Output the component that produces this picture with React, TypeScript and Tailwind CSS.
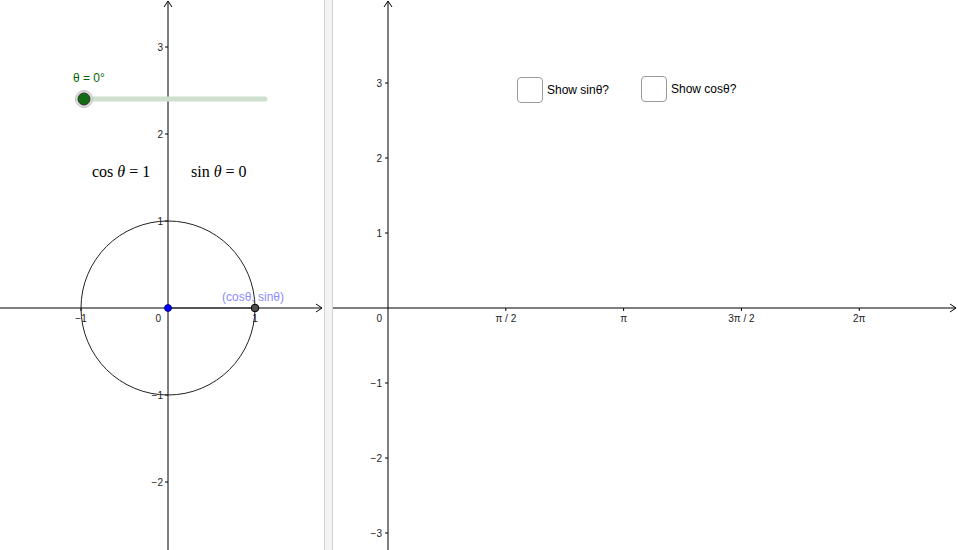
import React from "react";

const lab = "fill-[#222] text-[10px] font-['Liberation_Sans',Arial,sans-serif]";
const serif = "fill-black text-[16px] font-['Liberation_Serif','Times_New_Roman',serif]";

function minus(v: number) {
  return v < 0 ? `\u2212${-v}` : `${v}`;
}

function LeftGraph() {
  const ox = 168, oy = 308, u = 87;
  const yTicks = [3, 2, 1, -1, -2];
  return (
    <svg width={324} height={550} className="block">
      <line x1={0} y1={oy} x2={322} y2={oy} stroke="#000" strokeWidth={1} />
      <polyline points="316,304 322,308 316,312" fill="none" stroke="#000" strokeWidth={1} />
      <line x1={ox} y1={1} x2={ox} y2={550} stroke="#000" strokeWidth={1} />
      <polyline points="164,7 168,1 172,7" fill="none" stroke="#000" strokeWidth={1} />
      {yTicks.map((v) => {
        const y = oy - v * u;
        return (
          <g key={v}>
            <line x1={ox - 3} y1={y} x2={ox} y2={y} stroke="#000" />
            <text x={ox - 5} y={y + 4} textAnchor="end" className={lab}>
              {minus(v)}
            </text>
          </g>
        );
      })}
      {[-1, 1].map((v) => {
        const x = ox + v * u;
        return (
          <g key={v}>
            <line x1={x} y1={oy} x2={x} y2={oy + 3} stroke="#000" />
            <text x={x} y={oy + 14} textAnchor="middle" className={lab}>
              {minus(v)}
            </text>
          </g>
        );
      })}
      <text x={ox - 7} y={oy + 14} textAnchor="end" className={lab}>0</text>

      <circle cx={ox} cy={oy} r={u} fill="none" stroke="#222" strokeWidth={1} />
      <line x1={ox} y1={oy} x2={ox + u} y2={oy} stroke="#555" strokeWidth={2} />
      <circle cx={ox} cy={oy} r={3.5} fill="#0000ff" stroke="#00007a" strokeWidth={0.8} />
      <circle cx={ox + u} cy={oy} r={3.8} fill="#4d4d4d" stroke="#000" strokeWidth={1} />
      <text x={222} y={301} className="fill-[#8c8cff] text-[12px] font-['Liberation_Sans',Arial,sans-serif]">
        (cosθ, sinθ)
      </text>

      <text x={73} y={82} className="fill-[#006400] text-[12px] font-['Liberation_Sans',Arial,sans-serif]">
        θ = 0°
      </text>
      <line x1={84} y1={99} x2={265} y2={99} stroke="#cde0cd" strokeWidth={5} strokeLinecap="round" />
      <circle cx={84} cy={99} r={8.5} fill="#dcdcdc" stroke="#c4c4c4" strokeWidth={1} />
      <circle cx={84} cy={99} r={6} fill="#136b13" stroke="#333" strokeWidth={1} />

      <text x={92} y={177} className={serif}>
        cos <tspan fontStyle="italic">θ</tspan> = 1
      </text>
      <text x={191} y={177} className={serif}>
        sin <tspan fontStyle="italic">θ</tspan> = 0
      </text>
    </svg>
  );
}

function RightGraph() {
  const ox = 55, oy = 308, u = 75;
  const yTicks = [3, 2, 1, -1, -2, -3];
  const xTicks = [
    { v: Math.PI / 2, t: "π / 2" },
    { v: Math.PI, t: "π" },
    { v: (3 * Math.PI) / 2, t: "3π / 2" },
    { v: 2 * Math.PI, t: "2π" },
  ];
  return (
    <svg width={626} height={550} className="block">
      <line x1={0} y1={oy} x2={623} y2={oy} stroke="#000" strokeWidth={1} />
      <polyline points="617,304 623,308 617,312" fill="none" stroke="#000" strokeWidth={1} />
      <line x1={ox} y1={1} x2={ox} y2={550} stroke="#000" strokeWidth={1} />
      <polyline points="51,7 55,1 59,7" fill="none" stroke="#000" strokeWidth={1} />
      {yTicks.map((v) => {
        const y = oy - v * u;
        return (
          <g key={v}>
            <line x1={ox - 3} y1={y} x2={ox} y2={y} stroke="#000" />
            <text x={ox - 6} y={y + 4} textAnchor="end" className={lab}>
              {minus(v)}
            </text>
          </g>
        );
      })}
      {xTicks.map((k) => {
        const x = ox + k.v * u;
        return (
          <g key={k.t}>
            <line x1={x} y1={oy} x2={x} y2={oy + 3} stroke="#000" />
            <text x={x} y={oy + 14} textAnchor="middle" className={lab}>
              {k.t}
            </text>
          </g>
        );
      })}
      <text x={ox - 6} y={oy + 14} textAnchor="end" className={lab}>0</text>
    </svg>
  );
}

function Check({ label, className }: { label: string; className: string }) {
  return (
    <label className={`absolute flex items-center gap-[4px] ${className}`}>
      <span className="block w-[26px] h-[26px] rounded-[4px] border border-[#9a9a9a] bg-white" />
      <span className="text-[12px] text-black leading-none">{label}</span>
    </label>
  );
}

export default function App() {
  return (
    <div className="flex w-[958px] h-[550px] bg-white overflow-hidden font-['Liberation_Sans',Arial,sans-serif]">
      <div className="w-[324px] h-full shrink-0">
        <LeftGraph />
      </div>
      <div className="w-[9px] h-full shrink-0 bg-[#f3f3f3] border-x border-[#d4d4d4]" />
      <div className="relative flex-1 h-full">
        <RightGraph />
        <Check label="Show sinθ?" className="left-[184px] top-[77px]" />
        <Check label="Show cosθ?" className="left-[308px] top-[76px]" />
      </div>
    </div>
  );
}
